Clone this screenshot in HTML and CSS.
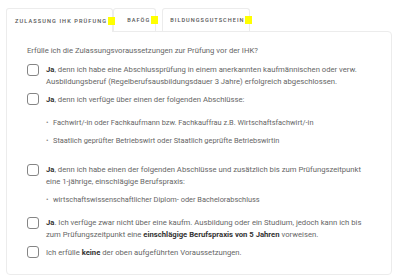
FILE: index.html
```html
<!DOCTYPE html>
<html lang="de">
<head>
    <meta charset="UTF-8">
    <meta name="viewport" content="width=device-width, initial-scale=1.0">
    <title>Zulassung</title>
    <link rel="stylesheet" href="styles.css">
</head>
<body>
    <!-- Tab navigation -->
    <div class="tabs">
        <div class="tab active">Zulassung IHK Prüfung<span class="marker"></span></div>
        <div class="tab">BAföG<span class="marker"></span></div>
        <div class="tab tab-gap">Bildungsgutschein<span class="marker"></span></div>
    </div>

    <!-- Tab content -->
    <div class="panel">
        <p class="question">Erfülle ich die Zulassungsvoraussetzungen zur Prüfung vor der IHK?</p>

        <label class="option">
            <span class="box"></span>
            <span class="option-text"><b>Ja</b>, denn ich habe eine Abschlussprüfung in einem anerkannten kaufmännischen oder verw. Ausbildungsberuf (Regelberufsausbildungsdauer 3 Jahre) erfolgreich abgeschlossen.</span>
        </label>

        <label class="option">
            <span class="box"></span>
            <span class="option-text"><b>Ja</b>, denn ich verfüge über einen der folgenden Abschlüsse:</span>
        </label>
        <ul class="list">
            <li>Fachwirt/-in oder Fachkaufmann bzw. Fachkauffrau z.B. Wirtschaftsfachwirt/-in</li>
            <li>Staatlich geprüfter Betriebswirt oder Staatlich geprüfte Betriebswirtin</li>
        </ul>

        <label class="option option-far">
            <span class="box"></span>
            <span class="option-text"><b>Ja</b>, denn ich habe einen der folgenden Abschlüsse und zusätzlich bis zum Prüfungszeitpunkt eine 1-jährige, einschlägige Berufspraxis:</span>
        </label>
        <ul class="list list-short">
            <li>wirtschaftswissenschaftlicher Diplom- oder Bachelorabschluss</li>
        </ul>

        <label class="option option-after">
            <span class="box"></span>
            <span class="option-text"><b>Ja</b>. Ich verfüge zwar nicht über eine kaufm. Ausbildung oder ein Studium, jedoch kann ich bis zum Prüfungszeitpunkt eine <b>einschlägige Berufspraxis von 5 Jahren</b> vorweisen.</span>
        </label>

        <label class="option">
            <span class="box"></span>
            <span class="option-text">Ich erfülle <b>keine</b> der oben aufgeführten Voraussetzungen.</span>
        </label>
    </div>
</body>
</html>
```

FILE: styles.css
```css
body {
    margin: 0;
    padding: 8px 8px 0 6px;
    font-family: Roboto, "Liberation Sans", sans-serif;
    color: #666;
    background: #fff;
}

.tabs {
    display: flex;
    align-items: flex-end;
}

.tab {
    display: flex;
    align-items: center;
    height: 22px;
    padding-left: 8px;
    border: 1px solid #ececec;
    border-bottom: none;
    border-radius: 3px 3px 0 0;
    font-size: 5.6px;
    font-weight: 500;
    letter-spacing: 1.1px;
    text-transform: uppercase;
    color: #555;
    background: #fff;
}

.tab + .tab {
    padding-left: 13px;
    letter-spacing: 1px;
}

.tab.tab-gap {
    margin-left: 6px;
    padding-left: 7px;
}

.tab.active {
    position: relative;
    z-index: 1;
    height: 23px;
    margin-bottom: -1px;
}

.marker {
    display: inline-block;
    width: 7px;
    height: 8px;
    margin-left: 1px;
    margin-right: -3px;
    background: #ffff00;
}

.panel {
    border: 1px solid #ececec;
    border-radius: 0 4px 4px 4px;
    padding: 13px 22px 16px 20px;
    font-size: 7.7px;
    line-height: 11.5px;
}

.panel b {
    color: #333;
    font-weight: 700;
}

.question {
    margin: 0;
}

.option {
    display: flex;
    align-items: flex-start;
    gap: 7px;
    margin-top: 6.5px;
}

.option:first-of-type {
    margin-top: 7.5px;
}

.option.option-far {
    margin-top: 17.5px;
}

.option.option-after {
    margin-top: 12px;
}

.box {
    flex: none;
    width: 10px;
    height: 10px;
    border: 1px solid #858585;
    border-radius: 3px;
    background: #fff;
    margin-top: -0.5px;
}

.list {
    list-style: none;
    margin: 12px 0 0 0;
    padding: 0 0 0 19px;
    font-size: 7.4px;
}

.list li {
    position: relative;
    padding-left: 7px;
    margin-bottom: 6.5px;
}

.list li::before {
    content: "•";
    position: absolute;
    left: 0;
    color: #888;
}

.list-short {
    margin-top: 6.5px;
}
```
